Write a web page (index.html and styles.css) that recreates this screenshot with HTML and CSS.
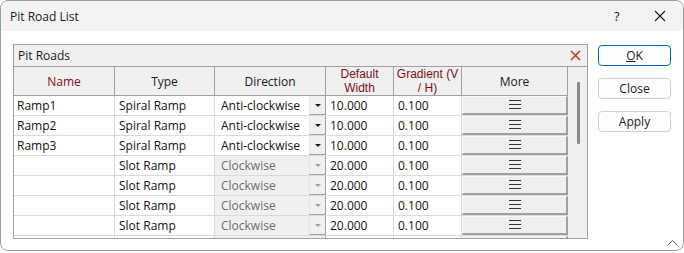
FILE: index.html
```html
<!DOCTYPE html>
<html>
<head>
<meta charset="utf-8">
<link rel="stylesheet" href="styles.css">
</head>
<body>
<div class="window">
  <div class="titlebar">
    <span class="title">Pit Road List</span>
    <span class="help">?</span>
    <svg class="close-x" width="12" height="12" viewBox="0 0 12 12"><path d="M1 1L11 11M11 1L1 11" stroke="#1a1a1a" stroke-width="1.1" fill="none"/></svg>
  </div>
  <div class="content">
    <div class="panel">
      <div class="panel-head">
        <span>Pit Roads</span>
        <svg class="panel-x" width="11" height="11" viewBox="0 0 11 11"><path d="M1 1L10 10M10 1L1 10" stroke="#d0302c" stroke-width="1.5" fill="none"/></svg>
      </div>
      <div class="panel-body">
        <div class="grid">
          <div class="hcell req">Name</div>
          <div class="hcell">Type</div>
          <div class="hcell">Direction</div>
          <div class="hcell req two"><span class="hl">Default</span><span class="hl">Width</span></div>
          <div class="hcell req two"><span class="hl">Gradient (V</span><span class="hl">/ H)</span></div>
          <div class="hcell">More</div>

          <div class="cell first">Ramp1</div>
          <div class="cell">Spiral Ramp</div>
          <div class="cell combo"><span class="ctext">Anti-clockwise</span><span class="arrow"></span></div>
          <div class="cell">10.000</div>
          <div class="cell">0.100</div>
          <div class="cell more"><div class="mbtn"><span class="burger"></span></div></div>

          <div class="cell first">Ramp2</div>
          <div class="cell">Spiral Ramp</div>
          <div class="cell combo"><span class="ctext">Anti-clockwise</span><span class="arrow"></span></div>
          <div class="cell">10.000</div>
          <div class="cell">0.100</div>
          <div class="cell more"><div class="mbtn"><span class="burger"></span></div></div>

          <div class="cell first">Ramp3</div>
          <div class="cell">Spiral Ramp</div>
          <div class="cell combo"><span class="ctext">Anti-clockwise</span><span class="arrow"></span></div>
          <div class="cell">10.000</div>
          <div class="cell">0.100</div>
          <div class="cell more"><div class="mbtn"><span class="burger"></span></div></div>

          <div class="cell first"></div>
          <div class="cell">Slot Ramp</div>
          <div class="cell combo disabled"><span class="ctext">Clockwise</span><span class="arrow"></span></div>
          <div class="cell">20.000</div>
          <div class="cell">0.100</div>
          <div class="cell more"><div class="mbtn"><span class="burger"></span></div></div>

          <div class="cell first"></div>
          <div class="cell">Slot Ramp</div>
          <div class="cell combo disabled"><span class="ctext">Clockwise</span><span class="arrow"></span></div>
          <div class="cell">20.000</div>
          <div class="cell">0.100</div>
          <div class="cell more"><div class="mbtn"><span class="burger"></span></div></div>

          <div class="cell first"></div>
          <div class="cell">Slot Ramp</div>
          <div class="cell combo disabled"><span class="ctext">Clockwise</span><span class="arrow"></span></div>
          <div class="cell">20.000</div>
          <div class="cell">0.100</div>
          <div class="cell more"><div class="mbtn"><span class="burger"></span></div></div>

          <div class="cell first"></div>
          <div class="cell">Slot Ramp</div>
          <div class="cell combo disabled"><span class="ctext">Clockwise</span><span class="arrow"></span></div>
          <div class="cell">20.000</div>
          <div class="cell">0.100</div>
          <div class="cell more"><div class="mbtn"><span class="burger"></span></div></div>

          <div class="cell first"></div>
          <div class="cell"></div>
          <div class="cell combo disabled"><span class="ctext"></span><span class="arrow"></span></div>
          <div class="cell"></div>
          <div class="cell"></div>
          <div class="cell more"><div class="mbtn"></div></div>
        </div>
        <div class="scroll"><div class="thumb"></div></div>
      </div>
    </div>
    <div class="buttons">
      <div class="btn default"><span class="ul">O</span>K</div>
      <div class="btn">Close</div>
      <div class="btn">Apply</div>
    </div>
  </div>
  <svg class="grip" width="11" height="7" viewBox="0 0 11 7"><path d="M0.5 6.5L5.5 1.5L10.5 6.5" stroke="#555" stroke-width="1" fill="none"/></svg>
</div>
</body>
</html>
```
FILE: styles.css
```css
* { box-sizing: border-box; }
html, body { margin: 0; padding: 0; background: #fff; }
body {
  font-family: "Segoe UI", "Open Sans", "Noto Sans", sans-serif;
  font-size: 12px;
  color: #1a1a1a;
}
.window {
  position: relative;
  width: 684px;
  height: 251px;
  border: 1px solid #9c9c9c;
  border-radius: 8px;
  overflow: hidden;
  background: #fff;
  display: flex;
  flex-direction: column;
}
.titlebar {
  height: 30px;
  flex: none;
  background: #f3f3f3;
  display: flex;
  align-items: center;
  padding-left: 9px;
}
.title { flex: 1; font-size: 12px; }
.help { width: 20px; margin-right: 20px; font-size: 13px; }
.close-x { margin-right: 17px; }
.content {
  display: flex;
  padding: 13px 0 0 12px;
  gap: 10px;
}
.panel {
  width: 575px;
  height: 195px;
  border: 1px solid #a0a0a0;
  overflow: hidden;
  display: flex;
  flex-direction: column;
}
.panel-head {
  height: 22px;
  flex: none;
  background: #f0f0f0;
  border-bottom: 1px solid #a0a0a0;
  display: flex;
  align-items: center;
  justify-content: space-between;
  padding: 0 6px 0 4px;
}
.panel-body { display: flex; flex: 1; overflow: hidden; }
.grid {
  display: grid;
  grid-template-columns: 101px 100px 111px 68px 68px 106px;
  grid-auto-rows: 20px;
  grid-template-rows: 29px;
  width: 554px;
  align-content: start;
}
.hcell {
  background: #f0f0f0;
  border-right: 1px solid #a0a0a0;
  border-bottom: 1px solid #a0a0a0;
  display: flex;
  align-items: center;
  justify-content: center;
  text-align: center;
  color: #1a1a1a;
}
.hcell.two { flex-direction: column; }
.hl {
  display: block;
  height: 14px;
  line-height: 14px;
  white-space: nowrap;
  font-family: "Liberation Sans", Arial, sans-serif;
  font-size: 12px;
}
.hcell.req { color: #7b1020; }
.cell {
  border-right: 1px solid #dadada;
  border-bottom: 1px solid #dadada;
  padding-left: 4px;
  display: flex;
  align-items: center;
  white-space: nowrap;
  overflow: hidden;
  color: #111;
}
.cell.first { padding-left: 3px; }
.combo { padding-left: 0; border-right: 0; }
.ctext { flex: 1; padding-left: 6px; align-self: stretch; display: flex; align-items: center; }
.combo.disabled .ctext { background: #f0f0f0; color: #6d6d6d; }
.arrow {
  width: 17px;
  align-self: stretch;
  background: #f0f0f0;
  border-left: 1px solid #e6e6e6;
  border-right: 1px solid #a0a0a0;
  border-bottom: 1px solid #a0a0a0;
  position: relative;
}
.arrow::after {
  content: "";
  position: absolute;
  left: 5px;
  top: 8px;
  border-left: 3px solid transparent;
  border-right: 3px solid transparent;
  border-top: 3px solid #1a1a1a;
}
.combo.disabled .arrow::after { border-top-color: #a0a0a0; }
.more { padding: 0; border-right: 0; }
.mbtn {
  width: 100%;
  height: 100%;
  background: #efefef;
  border-top: 1px solid #f8f8f8;
  border-left: 1px solid #f8f8f8;
  border-right: 2px solid #a0a0a0;
  border-bottom: 2px solid #a0a0a0;
  display: flex;
  align-items: center;
  justify-content: center;
}
.burger {
  width: 12px;
  height: 9px;
  border-top: 1px solid #333;
  border-bottom: 1px solid #333;
  position: relative;
  margin-top: -2px;
}
.burger::after {
  content: "";
  position: absolute;
  left: 0; right: 0;
  top: 3px;
  border-top: 1px solid #333;
}
.scroll {
  width: 19px;
  background: #f0f0f0;
  position: relative;
}
.thumb {
  position: absolute;
  left: 9px;
  top: 15px;
  width: 3px;
  height: 62px;
  background: #8a8a8a;
  border-radius: 1px;
}
.buttons {
  width: 73px;
  display: flex;
  flex-direction: column;
  gap: 12px;
  padding-top: 1px;
}
.btn {
  height: 21px;
  border: 1px solid #d0d0d0;
  border-radius: 4px;
  background: #fdfdfd;
  display: flex;
  align-items: center;
  justify-content: center;
  color: #1a1a1a;
}
.btn.default { border-color: #0067c0; }
.ul { text-decoration: underline; }
.grip { position: absolute; right: 5px; bottom: 4px; }
```
